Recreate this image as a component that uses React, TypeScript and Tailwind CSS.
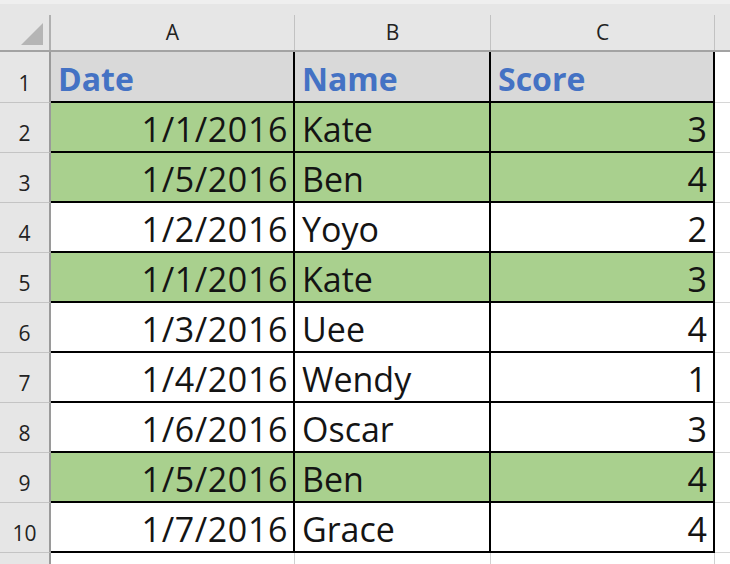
import React from "react";

type Row = { n: number; d: string; name: string; s: number; g: boolean };

const rows: Row[] = [
  { n: 2, d: "1/1/2016", name: "Kate", s: 3, g: true },
  { n: 3, d: "1/5/2016", name: "Ben", s: 4, g: true },
  { n: 4, d: "1/2/2016", name: "Yoyo", s: 2, g: false },
  { n: 5, d: "1/1/2016", name: "Kate", s: 3, g: true },
  { n: 6, d: "1/3/2016", name: "Uee", s: 4, g: false },
  { n: 7, d: "1/4/2016", name: "Wendy", s: 1, g: false },
  { n: 8, d: "1/6/2016", name: "Oscar", s: 3, g: false },
  { n: 9, d: "1/5/2016", name: "Ben", s: 4, g: true },
  { n: 10, d: "1/7/2016", name: "Grace", s: 4, g: false },
];

const cols = "grid grid-cols-[51px_244px_196px_224px_15px]";

function RowHead({ n }: { n: number }) {
  return (
    <div className="flex items-end justify-center pb-[8px] bg-[#e6e6e6] border-r-2 border-r-[#9a9a9a] border-b border-b-[#c4c4c4] text-[21px] leading-none text-[#222]">
      {n}
    </div>
  );
}

export default function App() {
  return (
    <div className="w-[730px] h-[564px] overflow-hidden bg-white font-['Open_Sans',sans-serif] text-[#141414]">
      {/* column header */}
      <div className="bg-[#e6e6e6] border-b-2 border-b-[#a3a3a3]">
        <div className="h-[4px] bg-[#efefef]" />
        <div className="h-[11px]" />
        <div className={`${cols} h-[35px]`}>
          <div className="relative border-r-2 border-r-[#b0b0b0]">
            <svg className="absolute left-[20px] top-[8px]" width="24" height="23" viewBox="0 0 24 23">
              <polygon points="1,22 23,22 23,0" fill="#b5b5b5" />
            </svg>
          </div>
          {["A", "B", "C"].map((c) => (
            <div key={c} className="flex items-center justify-center border-r border-r-[#c2c2c2] text-[21px] leading-none text-[#222]">
              {c}
            </div>
          ))}
          <div />
        </div>
      </div>

      {/* row 1 */}
      <div className={`${cols} h-[51px]`}>
        <RowHead n={1} />
        {["Date", "Name", "Score"].map((h) => (
          <div key={h} className="flex items-end pl-[7px] pb-[6px] bg-[#d9d9d9] border-r-2 border-b-2 border-black text-[32px] leading-none font-bold text-[#4472c4]">
            {h}
          </div>
        ))}
        <div className="border-b border-b-[#d6d6d6]" />
      </div>

      {rows.map((r) => {
        const bg = r.g ? "bg-[#a9d08e]" : "bg-white";
        return (
          <div key={r.n} className={`${cols} h-[50px]`}>
            <RowHead n={r.n} />
            <div className={`flex items-end justify-end pr-[5px] pb-[5px] border-r-2 border-b-2 border-black text-[34px] leading-none tracking-[0.6px] ${bg}`}>
              {r.d}
            </div>
            <div className={`flex items-end pl-[7px] pb-[5px] border-r-2 border-b-2 border-black text-[34px] leading-none ${bg}`}>
              {r.name}
            </div>
            <div className={`flex items-end justify-end pr-[6px] pb-[5px] border-r-2 border-b-2 border-black text-[34px] leading-none ${bg}`}>
              {r.s}
            </div>
            <div className="border-b border-b-[#d6d6d6]" />
          </div>
        );
      })}

      {/* trailing partial row */}
      <div className={`${cols} h-[11px]`}>
        <div className="bg-[#e6e6e6] border-r-2 border-r-[#9a9a9a]" />
        <div className="border-r border-r-[#d0d0d0]" />
        <div className="border-r border-r-[#d0d0d0]" />
        <div className="border-r border-r-[#d0d0d0]" />
        <div />
      </div>
    </div>
  );
}
